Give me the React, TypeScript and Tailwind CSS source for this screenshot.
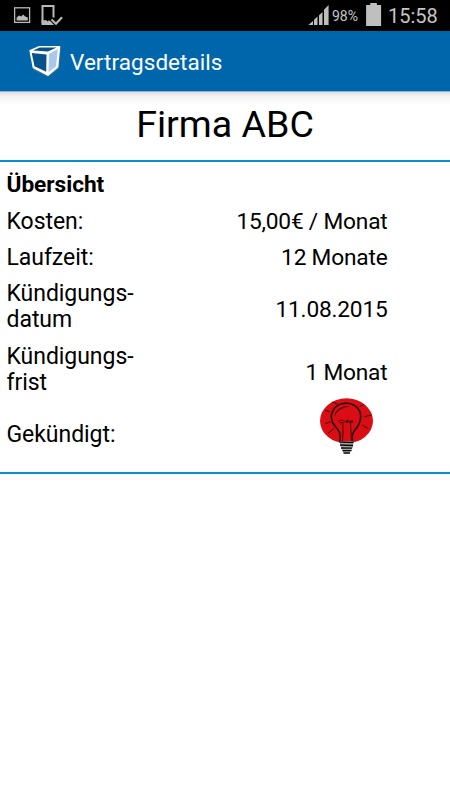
import type { ReactNode } from 'react';

function StatusBar() {
  return (
    <div className="flex h-[31px] justify-between bg-black pr-3 pl-[13.500px] text-[#c5c5c5]">
      <svg width="50" height="31" viewBox="0 0 50 31">
        <g fill="none" stroke="#b9b9b9">
          <rect x=".6" y="7.800" width="15" height="14.600" strokeWidth="1.300" />
          <path d="M28.500 23V6h11v11.500" strokeWidth="2" />
          <path d="M37.500 19.500l4.500 4.200 6-6.500" strokeWidth="2.200" />
        </g>
        <path d="M2.600 20.500v-3l2.600-2 2 1 2-2 2 2 2.600 1v3z" fill="#b9b9b9" />
        <path d="M27.500 20.200h5l1 1.200 1.500-1.200 2 1.500 3 3.300H27.500z" fill="#b9b9b9" />
      </svg>
      <div className="flex">
        <svg width="22" height="31" viewBox="0 0 22 31" fill="#bdbdbd">
          <path d="M.3 25l4.700-4v4zM6 19.800l3.500-3.200V25H6zM11 15.300l3.500-3.300V25H11zM16 9.800l4.600-4.800V25H16z" />
        </svg>
        <span className="ml-0.5 w-7 pt-[7px] text-[14px] leading-[18px]">98%</span>
        <svg width="16" height="31" viewBox="0 0 16 31" className="ml-[5.500px] fill-[#bfbfbf]">
          <path d="M4.300 3h6.600v2h4.200v21h-15V5h4.200z" />
        </svg>
        <span className="ml-[6.500px] w-[50px] pt-[3.500px] text-[20px] leading-[24px]">15:58</span>
      </div>
    </div>
  );
}

function CubeLogo() {
  return (
    <svg width="34" height="34" viewBox="0 0 34 34" className="mt-0.5 shrink-0">
      <path d="M2.500 8L12 3l21.300-.8-1.800 21.300L20.500 32.500 5.500 25.500z" fill="#3d6f91" opacity=".75" />
      <path d="M1.300 5.200L11 1h21.300l-2 21.500-10.300 8.500L4.700 23z" fill="#fff" />
      <path d="M5 5.500l6.700-2.900h16.800l-8.500 4z" fill="#07528a" />
      <path d="M3.700 8l14.800 1.600-.3 17.200L6.500 21.200z" fill="#07528a" />
      <path d="M21 8.700l8.800-4.500-1.800 17.300L20.500 27z" fill="#a9c8ec" />
    </svg>
  );
}

function Bulb() {
  return (
    <svg width="53" height="57" viewBox="0 0 53 57" className="-mt-px block">
      <ellipse cx="26.500" cy="22.800" rx="26.500" ry="22.500" fill="#d90d13" />
      <g fill="none" stroke="#160506" strokeLinecap="round" strokeLinejoin="round">
        <path d="M20 43.500c1-8.500-1-11-4.700-15C10.700 23 10.200 17 13.300 11.800 16 7.500 20.500 5.300 26 5.300c8 0 14.700 5.200 14.700 13.200 0 6-2 9-5 12.500-3 3.500-4.100 6-3.100 12.500" strokeWidth="1.500" />
        <path d="M15 17c1-5 6.500-8.500 13-8.600M15.500 15.500c2-3 4.500-4.800 7-5.500" strokeWidth=".8" />
        <path d="M22.500 43c.5-7.500.6-12.500.2-18.500-2.800.8-4.200-.6-3-1.800 1.500-1.300 3.800.1 5.200.8 1.600.8 4.200.7 3.400-.9-.9-1.300-3 .2-1.400 1.300 1.800 1 3.900-1.700 5.700-.9 1.300.7.300 1.500-2.200 1.400l1 18" strokeWidth=".8" />
        <path d="M12.500 4.300l4.500 1.200M5.300 12.500l4.500 1.200M6 25.300l4-1.200M8.500 35.200l5.200-4.500M40 8.500l3.500-2M44.500 18.800l7-1.900M42.800 27.300l5 3" strokeWidth=".8" />
      </g>
      <path d="M19.500 43.500H33.500l-.5 6-3 4.800-6.500.5-2.500-5z" fill="#aaa8a6" />
      <path d="M19.500 44.200l14 .5M20 47l13 .5M21 50l11 .2M22.500 52.700l9-.1M23.500 55h6.500" stroke="#080808" strokeWidth="1.300" />
    </svg>
  );
}

function DetailRow({ label, value, size }: { label: ReactNode; value: ReactNode; size: string }) {
  return (
    <div className={`flex justify-between pr-[62.500px] pl-[6.500px] ${size}`}>
      <div>{label}</div>
      <div className="self-end text-right text-[22.700px] tracking-[-0.200px]">{value}</div>
    </div>
  );
}

export default function App() {
  return (
    <div className="h-[800px] w-[450px] overflow-hidden bg-white font-['Roboto',sans-serif] text-black">
      <StatusBar />
      <header className="flex h-[60px] items-center bg-[#0066ab] pl-7 text-white">
        <CubeLogo />
        <span className="ml-2 pt-0.5 text-[22.500px] leading-[26px] tracking-[0.050px]">Vertragsdetails</span>
      </header>
      <div className="h-[69px] border-t border-[#8fb2d5] bg-[linear-gradient(#dfdddf,#f3f2f3_4px,#fff_13px)] pt-2.5 text-center">
        <h1 className="text-[37.600px] leading-[44px]">Firma ABC</h1>
      </div>
      <section className="h-[314px] border-y-2 border-[#098dcc] pt-[9.500px] text-[23px] leading-[26.300px] tracking-[-0.050px]">
        <h2 className="h-9 pl-[6.500px] text-[22.700px] font-bold">Übersicht</h2>
        <div className="pt-px">
          <DetailRow label="Kosten:" value="15,00€ / Monat" size="h-[36.300px] pb-[10px]" />
          <DetailRow label="Laufzeit:" value="12 Monate" size="h-[36.300px] pb-[10px]" />
          <DetailRow label={<>Kündigungs-<br />datum</>} value="11.08.2015" size="h-[62.500px] pb-5" />
          <DetailRow label={<>Kündigungs-<br />frist</>} value="1 Monat" size="h-[55px] pb-3" />
          <div className="flex pl-[6.500px]">
            <div className="w-[313.500px] pt-[23.500px]">Gekündigt:</div>
            <Bulb />
          </div>
        </div>
      </section>
    </div>
  );
}
